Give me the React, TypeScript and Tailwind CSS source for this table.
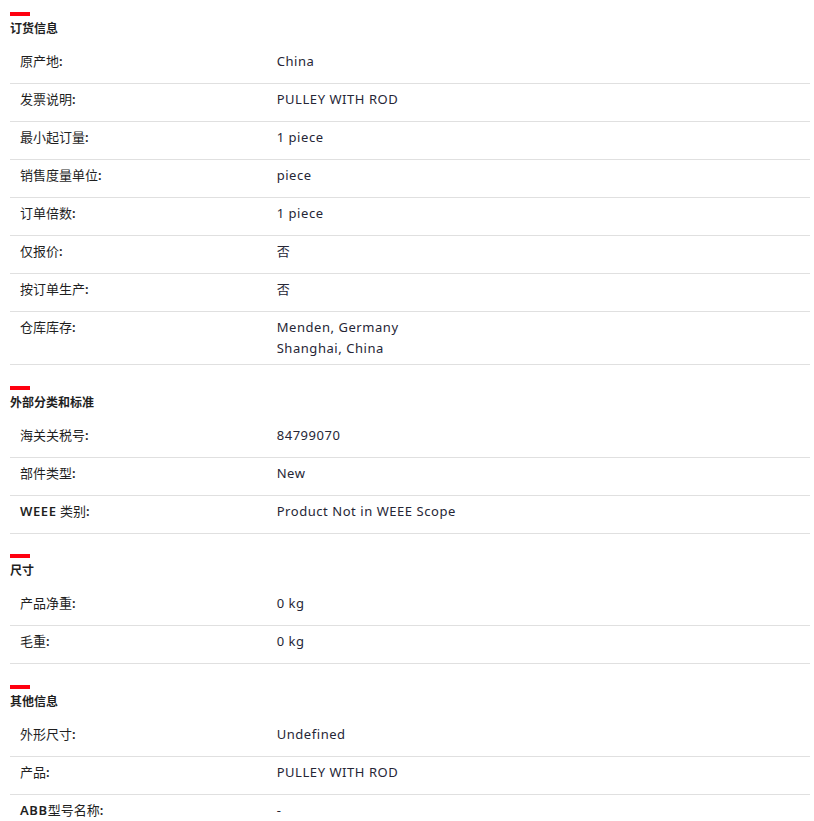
import React from "react";

type Row = {
  label: React.ReactNode;
  value: string[];
};

type Section = {
  title: string;
  rows: Row[];
};

const sections: Section[] = [
  {
    title: "订货信息",
    rows: [
      { label: "原产地", value: ["China"] },
      { label: "发票说明", value: ["PULLEY WITH ROD"] },
      { label: "最小起订量", value: ["1 piece"] },
      { label: "销售度量单位", value: ["piece"] },
      { label: "订单倍数", value: ["1 piece"] },
      { label: "仅报价", value: ["否"] },
      { label: "按订单生产", value: ["否"] },
      { label: "仓库库存", value: ["Menden, Germany", "Shanghai, China"] },
    ],
  },
  {
    title: "外部分类和标准",
    rows: [
      { label: "海关关税号", value: ["84799070"] },
      { label: "部件类型", value: ["New"] },
      {
        label: (
          <>
            <span className="font-semibold tracking-[0.6px]">WEEE</span> 类别
          </>
        ),
        value: ["Product Not in WEEE Scope"],
      },
    ],
  },
  {
    title: "尺寸",
    rows: [
      { label: "产品净重", value: ["0 kg"] },
      { label: "毛重", value: ["0 kg"] },
    ],
  },
  {
    title: "其他信息",
    rows: [
      { label: "外形尺寸", value: ["Undefined"] },
      { label: "产品", value: ["PULLEY WITH ROD"] },
      {
        label: (
          <>
            <span className="font-semibold tracking-[0.6px]">ABB</span>型号名称
          </>
        ),
        value: ["-"],
      },
    ],
  },
];

const FONT = "font-['Noto_Sans','Noto_Sans_CJK_SC',sans-serif]";

function SectionBlock({ section, first }: { section: Section; first: boolean }) {
  return (
    <section className={first ? "pt-3" : "pt-[20.5px]"}>
      <div className="h-1 w-5 bg-[#ff000f]" />
      <h3 className="mt-1 mb-[9px] text-[12px] font-bold leading-[17px] text-[#1f1f1f]">
        {section.title}
      </h3>
      <div>
        {section.rows.map((row, i) => (
          <div
            key={i}
            className="grid min-h-[38px] grid-cols-3 border-b border-[#e0e0e0] py-[5px] text-[13px] leading-[21px]"
          >
            <div className="pl-[10px] text-[#1f1f1f]">
              {row.label}
              <span className="font-semibold">:</span>
            </div>
            <div className="col-span-2 tracking-[0.55px] text-[#262636]">
              {row.value.map((v) => (
                <div key={v}>{v}</div>
              ))}
            </div>
          </div>
        ))}
      </div>
    </section>
  );
}

export default function App() {
  return (
    <div className={`min-h-screen bg-white px-[10px] pb-6 ${FONT}`}>
      <div className="w-[800px]">
        {sections.map((s, i) => (
          <SectionBlock key={s.title} section={s} first={i === 0} />
        ))}
      </div>
    </div>
  );
}
